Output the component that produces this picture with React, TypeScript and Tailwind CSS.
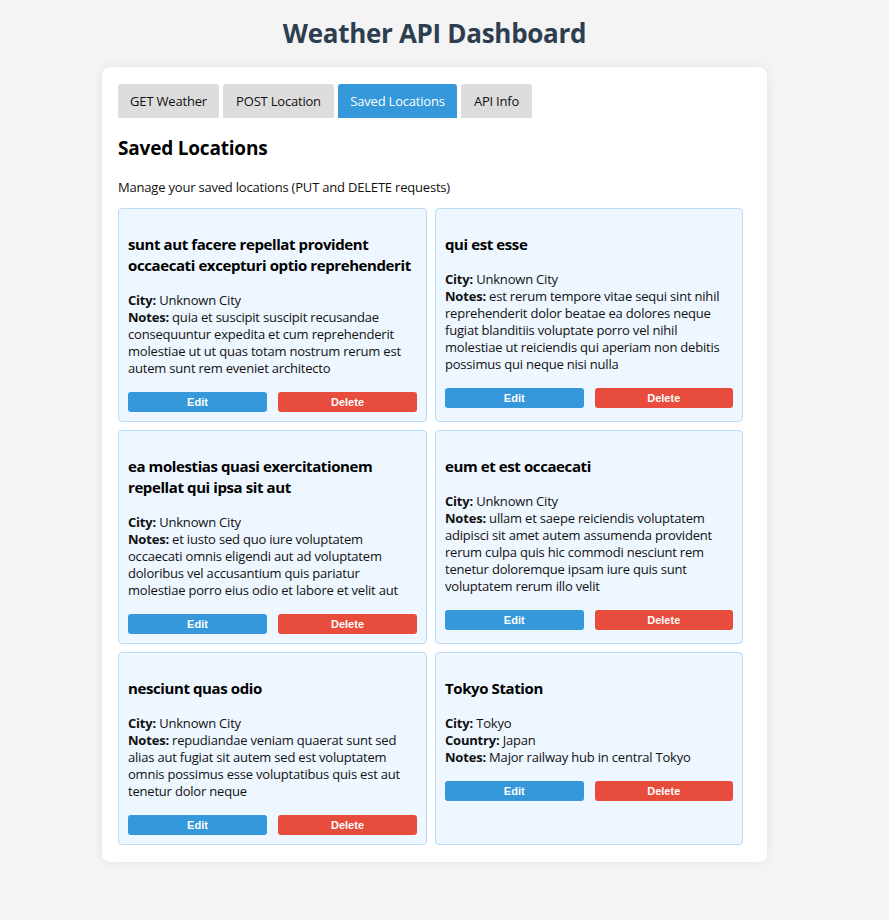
type Location = {
  id: number;
  name: string;
  city: string;
  country?: string;
  notes: string;
};

const locations: Location[] = [
  {
    id: 1,
    name: 'sunt aut facere repellat provident occaecati excepturi optio reprehenderit',
    city: 'Unknown City',
    notes:
      'quia et suscipit suscipit recusandae consequuntur expedita et cum reprehenderit molestiae ut ut quas totam nostrum rerum est autem sunt rem eveniet architecto',
  },
  {
    id: 2,
    name: 'qui est esse',
    city: 'Unknown City',
    notes:
      'est rerum tempore vitae sequi sint nihil reprehenderit dolor beatae ea dolores neque fugiat blanditiis voluptate porro vel nihil molestiae ut reiciendis qui aperiam non debitis possimus qui neque nisi nulla',
  },
  {
    id: 3,
    name: 'ea molestias quasi exercitationem repellat qui ipsa sit aut',
    city: 'Unknown City',
    notes:
      'et iusto sed quo iure voluptatem occaecati omnis eligendi aut ad voluptatem doloribus vel accusantium quis pariatur molestiae porro eius odio et labore et velit aut',
  },
  {
    id: 4,
    name: 'eum et est occaecati',
    city: 'Unknown City',
    notes:
      'ullam et saepe reiciendis voluptatem adipisci sit amet autem assumenda provident rerum culpa quis hic commodi nesciunt rem tenetur doloremque ipsam iure quis sunt voluptatem rerum illo velit',
  },
  {
    id: 5,
    name: 'nesciunt quas odio',
    city: 'Unknown City',
    notes:
      'repudiandae veniam quaerat sunt sed alias aut fugiat sit autem sed est voluptatem omnis possimus esse voluptatibus quis est aut tenetur dolor neque',
  },
  {
    id: 6,
    name: 'Tokyo Station',
    city: 'Tokyo',
    country: 'Japan',
    notes: 'Major railway hub in central Tokyo',
  },
];

const tabs = [
  { label: 'GET Weather', width: 'w-[101px]' },
  { label: 'POST Location', width: 'w-[111px]' },
  { label: 'Saved Locations', width: 'w-[119px]' },
  { label: 'API Info', width: 'w-[71px]' },
];

function LocationCard({ loc }: { loc: Location }) {
  return (
    <div className="border border-[#b9dcf7] bg-[#eef6ff] rounded-[4px] p-[9px]">
      <h3 className="mt-[16px] mb-[16px] text-[15px] leading-[21px] font-bold tracking-[-0.4px] text-black">
        {loc.name}
      </h3>
      <div className="text-[13px] leading-[17px] text-[#111]">
        <div>
          <strong>City:</strong> {loc.city}
        </div>
        {loc.country && (
          <div>
            <strong>Country:</strong> {loc.country}
          </div>
        )}
        <div>
          <strong>Notes:</strong> {loc.notes}
        </div>
      </div>
      <div className="flex gap-[11px] mt-[15px] font-['Liberation_Sans',Arial,sans-serif] tracking-normal">
        <button className="flex-1 h-[20px] rounded-[3px] bg-[#3498db] text-white text-[11px] font-bold">Edit</button>
        <button className="flex-1 h-[20px] rounded-[3px] bg-[#e74c3c] text-white text-[11px] font-bold">Delete</button>
      </div>
    </div>
  );
}

export default function App() {
  return (
    <div className="min-h-[920px] bg-[#f4f4f4] pl-[102px] pt-[14px] pb-10 font-['Open_Sans',sans-serif] tracking-[-0.2px]">
      <h1 className="w-[665px] text-center text-[26px] leading-[38px] font-bold tracking-[-0.3px] text-[#2c3e50]">
        Weather API Dashboard
      </h1>

      <div className="w-[665px] mt-[15px] bg-white rounded-[8px] shadow-[0_0_10px_rgba(0,0,0,0.08)] px-4 pt-[17px] pb-[17px]">
        {/* Tabs */}
        <div className="flex gap-[4px]">
          {tabs.map((t) => {
            const active = t.label === 'Saved Locations';
            return (
              <button
                key={t.label}
                className={`${t.width} h-[34px] pt-[1px] rounded-t-[3px] text-[13px] ${
                  active ? 'bg-[#3498db] text-white' : 'bg-[#ddd] text-[#111]'
                }`}
              >
                {t.label}
              </button>
            );
          })}
        </div>

        <h2 className="mt-[17px] text-[19px] leading-[26px] font-bold text-black">Saved Locations</h2>
        <p className="mt-[18px] text-[13px] leading-[17px] text-[#111]">
          Manage your saved locations (PUT and DELETE requests)
        </p>

        <div className="mt-[12px] grid grid-cols-[309px_308px] gap-2">
          {locations.map((loc) => (
            <LocationCard key={loc.id} loc={loc} />
          ))}
        </div>
      </div>
    </div>
  );
}
